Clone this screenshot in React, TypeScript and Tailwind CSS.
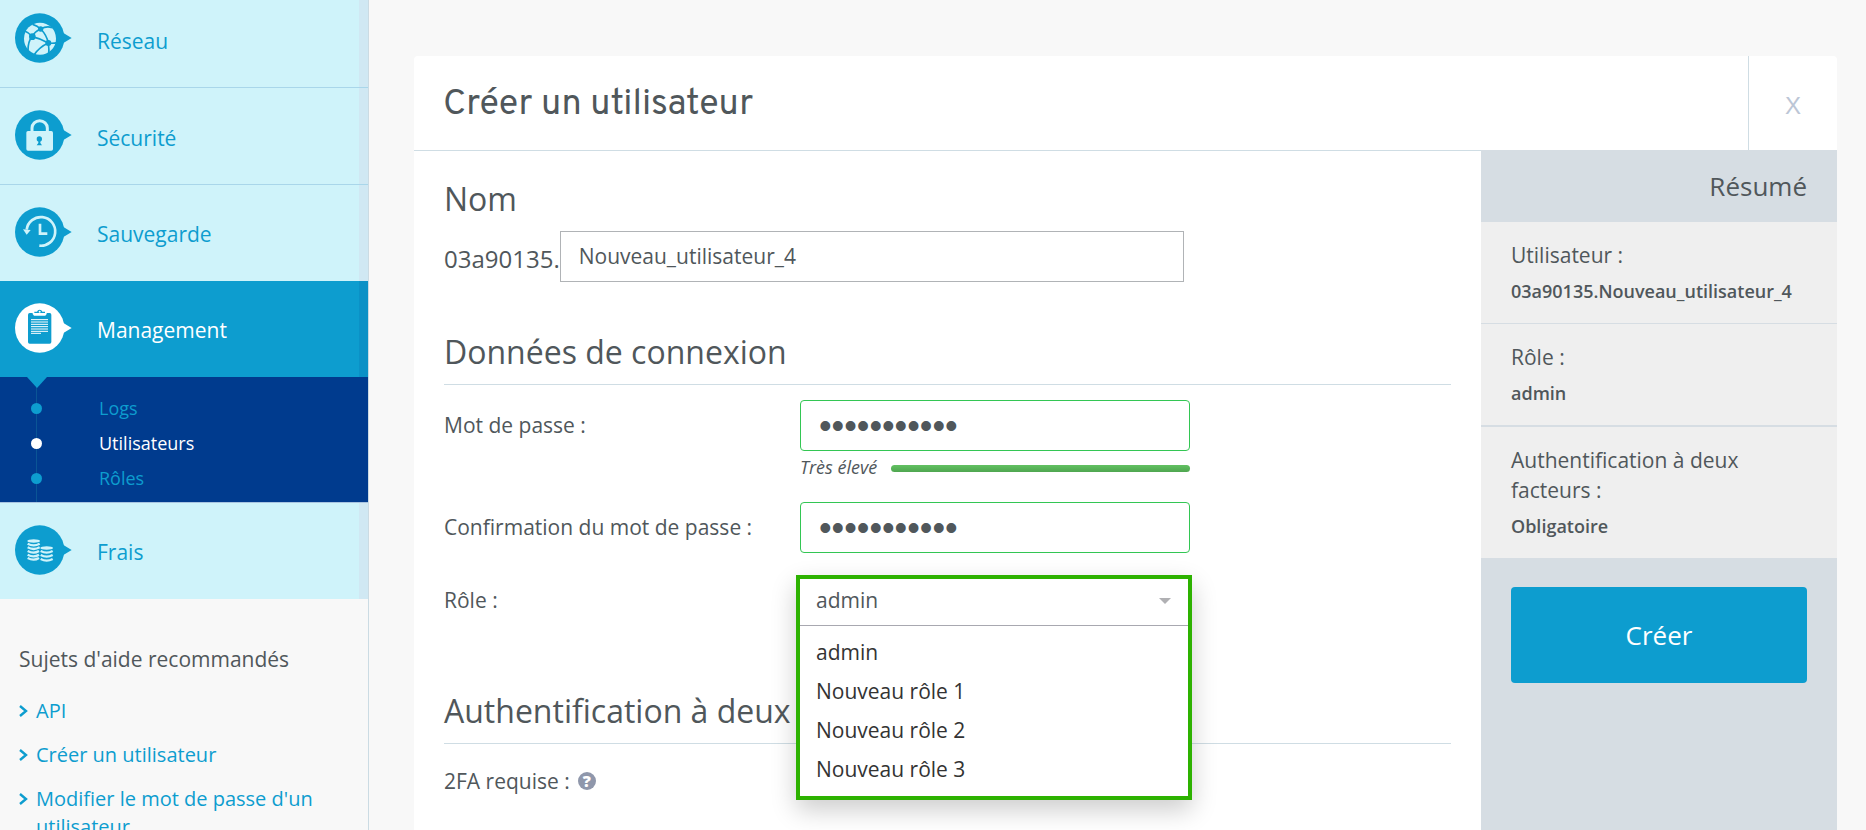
import React from "react";

const Bubble = ({ active, children }: any) => (
  <svg width="58" height="50" viewBox="42 40 174 150" className="shrink-0" aria-hidden="true">
    <g fill={active ? "#ffffff" : "#0d9dcf"}>
      <circle cx="119" cy="115" r="74" />
      <path d="M189 99 L215 115 L189 131 Z" />
    </g>
    {children}
  </svg>
);

const NetworkIcon = () => (
  <Bubble>
    <circle cx="120" cy="117" r="48" fill="#cff3fa" />
    <g fill="none" stroke="#0d9dcf" strokeWidth="5">
      <path d="M97 111 Q103 96 122 88 Q140 78 156 84" />
      <path d="M122 88 Q140 106 145 130 Q148 150 146 168" />
      <path d="M97 111 Q122 117 145 130 Q158 132 172 129" />
      <path d="M97 111 Q84 124 84 152" />
      <path d="M145 130 Q118 142 102 166" />
      <path d="M97 111 Q86 98 74 94" />
      <path d="M122 88 Q112 78 98 74" />
    </g>
    <g fill="#0d9dcf">
      <circle cx="122" cy="88" r="8" />
      <circle cx="97" cy="111" r="10" />
      <circle cx="145" cy="130" r="9" />
    </g>
  </Bubble>
);

const LockIcon = () => (
  <Bubble>
    <path d="M96 106 V94 A23 22 0 0 1 142 94 V106" fill="none" stroke="#cff3fa" strokeWidth="9" />
    <rect x="79" y="103" width="80" height="59" rx="5" fill="#cff3fa" />
    <circle cx="118" cy="127" r="8" fill="#0d9dcf" />
    <path d="M115 130 H121 V139 L126 146 H110 L115 139 Z" fill="#0d9dcf" />
  </Bubble>
);

const BackupIcon = () => (
  <Bubble>
    <path d="M118 156 A43 43 0 1 0 80 108" fill="none" stroke="#cff3fa" strokeWidth="8" />
    <path d="M69 107 L92 109 L80 123 Z" fill="#cff3fa" />
    <path d="M120 90 V120 H142" fill="none" stroke="#cff3fa" strokeWidth="8" />
  </Bubble>
);

const ClipboardIcon = () => (
  <Bubble active>
    <rect x="84" y="70" width="70" height="92" rx="5" fill="#0d9dcf" />
    <path d="M98 68 H140 V73 L136 78 H102 L98 73 Z" fill="#ffffff" />
    <path d="M103 70 V66 H111 Q113 60 119 60 Q125 60 127 66 H135 V70 Z" fill="#0d9dcf" />
    <circle cx="119" cy="66" r="3" fill="#ffffff" />
    <path d="M93 90 H144 M93 97 H144 M93 104 H144 M93 111 H144 M93 118 H144 M93 125 H144 M93 131 H123" stroke="#ffffff" strokeWidth="3" />
  </Bubble>
);

const CoinsIcon = () => (
  <Bubble>
    <g fill="#cff3fa">
      <ellipse cx="101" cy="88" rx="19" ry="5" />
      <ellipse cx="140" cy="109" rx="19" ry="5" />
    </g>
    <g fill="none" stroke="#cff3fa" strokeWidth="7">
      <path d="M83 96 Q101 106 119 96" />
      <path d="M83 107 Q101 117 119 107" />
      <path d="M83 118 Q101 128 117 118" />
      <path d="M83 129 Q101 139 117 129" />
      <path d="M83 139 Q101 149 117 139" />
      <path d="M122 118 Q140 128 158 118" />
      <path d="M122 130 Q140 140 158 130" />
      <path d="M122 142 Q140 152 158 142" />
    </g>
  </Bubble>
);

const NavItem = ({ icon, label, active, border }: any) => {
  let rowStyles = "bg-[#cff3fa] text-[#0d9dcf] border-[#d0e8f3]";
  if (active) rowStyles = "bg-[#0d9dcf] text-white border-[#0b91c6]";

  return (
    <a href="#" className={`relative flex items-center gap-[25px] pl-[14px] text-[21px] leading-[30px] border-r-[9px] ${rowStyles} ${border ? "h-[97px]" : "h-24"}`}>
      <span className="pb-[3px]">{icon}</span>
      <span className="pt-[2px]">{label}</span>
      {border && <span className="absolute bottom-0 left-0 -right-[9px] h-px bg-[#a9d6ea]" />}
    </a>
  );
};

const SubItem = ({ label, active }: any) => (
  <a href="#" className={`flex items-center gap-[57px] pl-[31px] h-[35px] text-lg ${active ? "text-white" : "text-[#0d9dcf]"}`}>
    <span className={`relative w-[11px] h-[11px] rounded-full ${active ? "bg-white" : "bg-[#0d9dcf]"}`} />
    <span className="pb-[2px]">{label}</span>
  </a>
);

const HelpLink = ({ children }: any) => (
  <li className="flex items-start gap-2">
    <svg width="9" height="12" viewBox="0 0 9 12" className="mt-2 shrink-0" aria-hidden="true">
      <path d="M1 1 L7 6 L1 11" fill="none" stroke="#0d9dcf" strokeWidth="2.4" />
    </svg>
    <a href="#" className="text-[#0d9dcf]">{children}</a>
  </li>
);

const SectionTitle = ({ children }: any) => (
  <h2 className="text-[32px] leading-[44px] pb-[10px] border-b border-[#cfdde4]">{children}</h2>
);

const SummaryItem = ({ label, value }: any) => (
  <div className="bg-[#efefef] px-[30px] pt-[18px] pb-[17px]">
    <p className="text-[21px] leading-[30px]">{label}</p>
    <p className="mt-[6px] text-lg leading-[30px] font-semibold">{value}</p>
  </div>
);

const roles = ["admin", "Nouveau rôle 1", "Nouveau rôle 2", "Nouveau rôle 3"];

const passwordStyles = "block w-[390px] h-[51px] rounded-sm border border-[#33c653] px-[18px] text-[36px] font-['Liberation_Sans',sans-serif] outline-none";

export default function App() {
  return (
    <div className="flex h-screen w-full overflow-hidden bg-[#f8f8f8] text-[#50575b] font-['Open_Sans','Noto_Sans',sans-serif]">
      <aside className="w-[369px] shrink-0 border-r border-[#cbdbe3]">
        <nav className="-mt-[9px]">
          <NavItem icon={<NetworkIcon />} label="Réseau" border />
          <NavItem icon={<LockIcon />} label="Sécurité" border />
          <NavItem icon={<BackupIcon />} label="Sauvegarde" />
          <NavItem icon={<ClipboardIcon />} label="Management" active />
          <div className="relative bg-[#003b8e] pt-[14px] pb-[6px] border-b border-[#a9c4e0]">
            <span className="absolute left-9 top-0 bottom-0 w-px bg-[#0a5595]" />
            <svg width="20" height="11" viewBox="0 0 20 11" className="absolute left-[27px] top-0" aria-hidden="true">
              <path d="M0 0 H20 L10 11 Z" fill="#0d9dcf" />
            </svg>
            <SubItem label="Logs" />
            <SubItem label="Utilisateurs" active />
            <SubItem label="Rôles" />
          </div>
          <NavItem icon={<CoinsIcon />} label="Frais" />
        </nav>

        <section className="pl-[19px] pr-10 pt-[45px]">
          <h2 className="text-[21px] leading-[30px]">Sujets d'aide recommandés</h2>
          <ul className="mt-[23px] flex flex-col gap-4 text-[20px] leading-7">
            <HelpLink>API</HelpLink>
            <HelpLink>Créer un utilisateur</HelpLink>
            <HelpLink>Modifier le mot de passe d'un utilisateur</HelpLink>
          </ul>
        </section>
      </aside>

      <main className="flex-1 min-w-0 flex flex-col pt-14 pl-[45px] pr-[29px]">
        <header className="flex h-[94px] shrink-0 bg-white rounded-t">
          <h1 className="flex-1 pl-[29px] pt-[27px] text-[36px] leading-[44px] font-['Overpass','Roboto',sans-serif]">Créer un utilisateur</h1>
          <button aria-label="Fermer" className="w-[89px] pt-[6px] border-l border-[#cfdde4] text-2xl text-[#bcc6d6] font-['Liberation_Sans',sans-serif]">X</button>
        </header>

        <div className="flex flex-1">
          <form className="flex-1 min-w-0 bg-white border-t border-[#cfdde4] px-[30px]">
            <h2 className="pt-[26px] text-[32px] leading-[44px]">Nom</h2>
            <div className="mt-[10px] flex">
              <label htmlFor="username" className="pt-3 text-2xl">03a90135.</label>
              <input
                id="username"
                defaultValue="Nouveau_utilisateur_4"
                className="w-[624px] h-[51px] border border-[#b0b3b6] px-[18px] pb-[2px] text-[21px] outline-none"
              />
            </div>

            <div className="mt-12">
              <SectionTitle>Données de connexion</SectionTitle>
            </div>

            <div className="mt-[15px] flex">
              <label htmlFor="password" className="w-[356px] pt-[10px] text-[21px] leading-[30px]">Mot de passe :</label>
              <div className="w-[390px]">
                <input id="password" type="password" defaultValue="motdepasse1" className={passwordStyles} />
                <div className="flex items-center gap-[14px] pt-1">
                  <span className="text-lg leading-6 italic">Très élevé</span>
                  <div className="mt-[2px] flex-1 h-[7px] rounded bg-gradient-to-b from-[#62c162] to-[#4fa650]" />
                </div>
              </div>
            </div>

            <div className="mt-[23px] flex">
              <label htmlFor="confirm" className="w-[356px] pt-[10px] text-[21px] leading-[30px]">Confirmation du mot de passe :</label>
              <input id="confirm" type="password" defaultValue="motdepasse1" className={passwordStyles} />
            </div>

            <div className="mt-[22px] flex">
              <label htmlFor="role" className="w-[352px] pt-[10px] text-[21px] leading-[30px]">Rôle :</label>
              <div className="relative w-[396px] h-[51px]">
                <div className="absolute inset-x-0 top-0 border-4 border-[#2db200] bg-white shadow-[0_10px_24px_rgba(0,0,0,0.2)]">
                  <select id="role" defaultValue="admin" className="block w-full h-[47px] appearance-none border-b border-[#a8a8b0] px-4 pb-[2px] text-[21px] outline-none">
                    {roles.map((role) => <option key={role}>{role}</option>)}
                  </select>
                  <svg width="12" height="6" viewBox="0 0 12 6" className="absolute right-[17px] top-[19px] pointer-events-none" aria-hidden="true">
                    <path d="M0 0 H12 L6 6 Z" fill="#b0b0b3" />
                  </svg>
                  <ul role="listbox" aria-label="Rôle" className="pt-[7px] pb-[7px] text-[21px] text-[#333333]">
                    {roles.map((role) => (
                      <li key={role} role="option" aria-selected={role === "admin"} className="h-[39px] px-4 leading-[39px]">{role}</li>
                    ))}
                  </ul>
                </div>
              </div>
            </div>

            <div className="mt-[63px]">
              <SectionTitle>Authentification à deux facteurs</SectionTitle>
            </div>
            <div className="mt-[22px] flex items-center gap-2 text-[21px] leading-[30px]">
              <span>2FA requise :</span>
              <button type="button" aria-label="Aide" className="w-[18px] h-[18px] rounded-full bg-[#8f97ab] text-white text-base leading-[18px] font-extrabold">?</button>
            </div>
          </form>

          <aside className="w-[356px] shrink-0 bg-[#d6dde3]">
            <h2 className="h-[72px] px-[30px] pt-[18px] text-right text-[26px] leading-[36px]">Résumé</h2>
            <SummaryItem label="Utilisateur :" value="03a90135.Nouveau_utilisateur_4" />
            <div className="mt-px">
              <SummaryItem label="Rôle :" value="admin" />
            </div>
            <div className="mt-[2px]">
              <SummaryItem label="Authentification à deux facteurs :" value="Obligatoire" />
            </div>
            <div className="px-[30px] pt-[29px]">
              <button className="w-full h-24 rounded bg-[#0d9dcf] text-white text-[26px]">Créer</button>
            </div>
          </aside>
        </div>
      </main>
    </div>
  );
}
